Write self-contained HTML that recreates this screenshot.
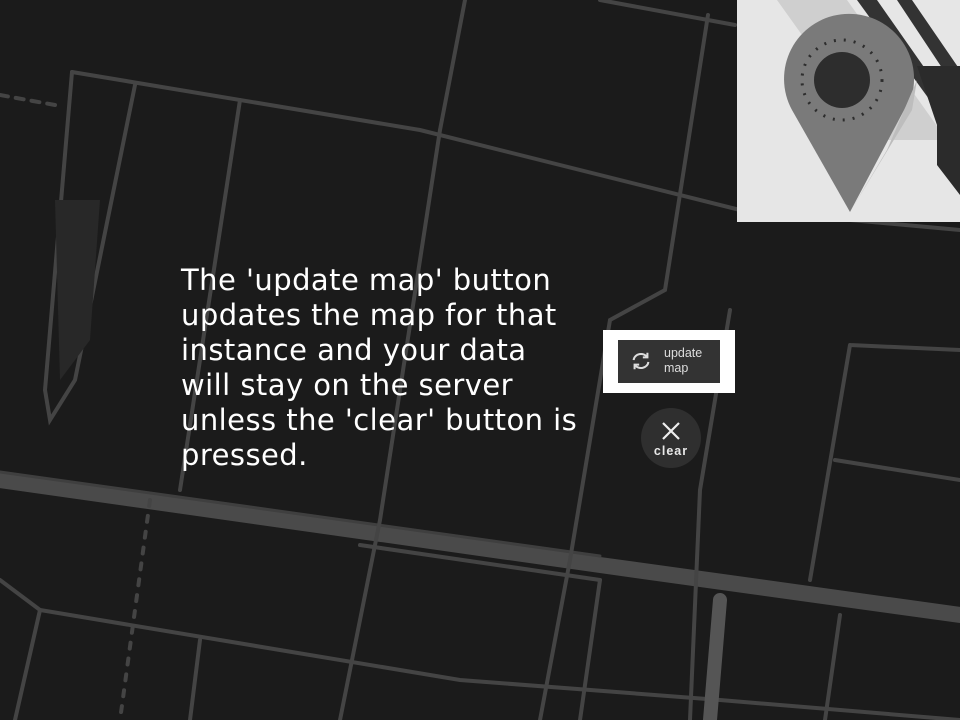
<!DOCTYPE html>
<html><head><style>
body{margin:0;width:960px;height:720px;overflow:hidden;background:#1b1b1b;position:relative;font-family:"DejaVu Sans","Liberation Sans",sans-serif}
svg{position:absolute;left:0;top:0}
.txt{position:absolute;left:181px;top:263px;color:#fff;font-size:29px;line-height:35px;white-space:nowrap;letter-spacing:0.45px}
.btnw{position:absolute;left:603px;top:330px;width:132px;height:63px;background:#fff}
.btn{position:absolute;left:15px;top:10px;width:102px;height:43px;background:#333;color:#ddd;font-family:"Liberation Sans",sans-serif;font-size:12.5px;line-height:15px}
.clear{position:absolute;left:641px;top:408px;width:60px;height:60px;border-radius:50%;background:#2f2f2f;color:#e8e8e8;font-family:"Liberation Sans",sans-serif;font-weight:bold;font-size:12.5px;text-align:center;letter-spacing:1px}
.logo{position:absolute;left:737px;top:0;width:223px;height:222px;background:#e6e6e6;overflow:hidden}
</style></head><body>
<svg width="960" height="720" fill="none" stroke="#444" stroke-width="4" stroke-linecap="round">
<path d="M0 480 L600 565 L960 615" stroke="#4a4a4a" stroke-width="16"/>
<path d="M0 472 L600 556" stroke="#3f3f3f" stroke-width="3"/>
<path d="M72 72 L420 130 L740 210 L960 230"/>
<path d="M72 72 L45 390 L50 420 L75 380 L135 85"/>
<path d="M240 100 L180 490"/>
<path d="M465 0 L440 130 L380 520 L340 720"/>
<path d="M708 15 L665 290 L610 320 L570 560 L540 720"/>
<path d="M730 310 L700 490 L690 720"/>
<path d="M850 345 L960 350 M850 345 L810 580"/>
<path d="M835 460 L960 480"/>
<path d="M360 545 L600 580"/>
<path d="M0 580 L40 610 L460 680 L720 700 L960 720"/>
<path d="M600 0 L735 25"/>
<path d="M600 580 L580 720"/>
<path d="M200 640 L190 720"/>
<path d="M720 600 L710 720" stroke="#555" stroke-width="14"/>
<path d="M840 615 L825 720"/>
<path d="M40 610 L15 720"/>
<path d="M150 500 L120 720" stroke="#444" stroke-dasharray="6 10"/>
<path d="M0 95 L55 105" stroke="#444" stroke-dasharray="8 8"/>
<path d="M55 200 L100 200 L90 340 L60 380 Z" fill="#282828" stroke="none"/>
</svg>
<div class="txt">The 'update map' button<br>updates the map for that<br>instance and your data<br>will stay on the server<br>unless the 'clear' button is<br>pressed.</div>
<div class="btnw"><div class="btn">
<svg width="22" height="22" viewBox="0 0 24 24" style="left:12px;top:10px" fill="none" stroke="#ddd" stroke-width="2.2"><path d="M4 11 A8 7 0 0 1 19 8 M20 13 A8 7 0 0 1 5 16"/><path d="M19 3 V8 H14 M5 21 V16 H10"/></svg>
<div style="position:absolute;left:46px;top:6px">update<br>map</div></div></div>
<div class="clear"><svg width="24" height="24" style="left:18px;top:11px" stroke="#eee" stroke-width="2.2"><path d="M4 4 L20 20 M20 4 L4 20"/></svg><div style="position:absolute;top:36px;width:60px">clear</div></div>
<div class="logo">
<svg width="223" height="222">
<path d="M40 0 L110 0 L210 140 L140 140 Z" fill="#cfcfcf"/>
<path d="M120 0 L140 0 L210 100 L200 110 Z" fill="#333"/>
<path d="M160 0 L175 0 L223 70 L223 95 Z" fill="#333"/>
<path d="M180 66 L223 66 L223 195 L200 165 L200 125 Z" fill="#2b2b2b"/>
<path d="M113 212 L55 110 A65 65 0 1 1 175 95 Z" fill="#7a7a7a"/>
<path d="M113 212 L150 150 L180 80 L175 110 Z" fill="#bdbdbd"/>
<circle cx="105" cy="80" r="28" fill="#2d2d2d"/>
<circle cx="105" cy="80" r="40" fill="none" stroke="#2d2d2d" stroke-width="3" stroke-dasharray="2 8"/>
</svg></div>
</body></html>
